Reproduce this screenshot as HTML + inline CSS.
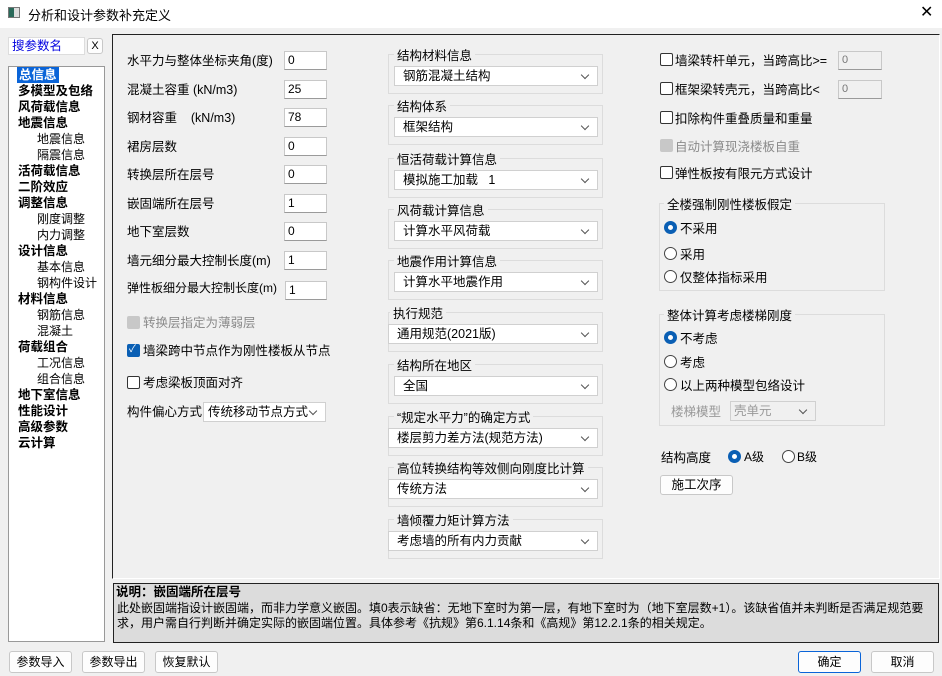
<!DOCTYPE html>
<html><head><meta charset="utf-8"><style>
*{box-sizing:border-box;margin:0;padding:0}
body{width:942px;height:676px;background:#f0f0f0;font-family:"Liberation Sans","Noto Sans CJK SC",sans-serif;font-size:12px;color:#000;position:relative;overflow:hidden}
.a{position:absolute;white-space:nowrap}
.in{position:absolute;background:#fff;border:1px solid #c8c8c8;border-bottom-color:#9a9a9a;height:19px;padding-left:3px;font-size:12px;line-height:17px}
.cb{position:absolute;width:13px;height:13px;border:1px solid #333;border-radius:2px;background:#fff}
.cbk{background:#0a5fb4;border-color:#0a5fb4}
.cbd{background:#c8c8c8;border-color:#c8c8c8}
.rd{position:absolute;width:13px;height:13px;border:1px solid #444;border-radius:50%;background:#fff}
.rdk{border:4px solid #0a5fb4;background:#fff}
.grp{position:absolute;border:1px solid #dcdcdc}
.gt{position:absolute;background:#f0f0f0;padding:0 3px;font-size:12.5px}
.combo{position:absolute;background:#fff;border:1px solid #d0d0d0;height:20px;padding-left:8px;line-height:18px;font-size:12.5px}
.combo:after{content:"";position:absolute;right:9px;top:5px;width:5px;height:5px;border-right:1px solid #555;border-bottom:1px solid #555;transform:rotate(45deg)}
.btn{position:absolute;background:#fdfdfd;border:1px solid #c8c8c8;border-radius:3px;text-align:center;font-size:12px;line-height:20px}
.tr{position:absolute;left:18px;font-size:12.5px;font-weight:bold;line-height:16px}
.ts{position:absolute;left:37px;font-size:12px;line-height:16px}
.l{position:absolute;left:127px;font-size:12.5px;white-space:nowrap}
</style></head><body>
<div class="a" style="left:0;top:0;width:942px;height:28px;background:#fff"></div>
<div class="a" style="left:8px;top:7px;width:12px;height:11px;border:1px solid #777;background:linear-gradient(90deg,#2a6a5a 50%,#ddd 50%)"></div>
<div class="a" style="left:28px;top:5px;font-size:13px">分析和设计参数补充定义</div>
<div class="a" style="left:920px;top:2px;font-size:16px">✕</div>

<div class="in" style="left:8px;top:37px;width:77px;height:18px;color:#0000e0;font-size:12.5px;border-color:#ddd">搜参数名</div>
<div class="btn" style="left:87px;top:38px;width:16px;height:16px;line-height:14px;font-size:11px">X</div>
<div class="a" style="left:8px;top:66px;width:97px;height:576px;background:#fff;border:1px solid #999"></div>
<div class="tr" style="top:67px;background:#0a64d8;color:#fff;padding:0 2px;left:17px">总信息</div>
<div class="tr" style="top:83px">多模型及包络</div>
<div class="tr" style="top:99px">风荷载信息</div>
<div class="tr" style="top:115px">地震信息</div>
<div class="ts" style="top:131px">地震信息</div>
<div class="ts" style="top:147px">隔震信息</div>
<div class="tr" style="top:163px">活荷载信息</div>
<div class="tr" style="top:179px">二阶效应</div>
<div class="tr" style="top:195px">调整信息</div>
<div class="ts" style="top:211px">刚度调整</div>
<div class="ts" style="top:227px">内力调整</div>
<div class="tr" style="top:243px">设计信息</div>
<div class="ts" style="top:259px">基本信息</div>
<div class="ts" style="top:275px">钢构件设计</div>
<div class="tr" style="top:291px">材料信息</div>
<div class="ts" style="top:307px">钢筋信息</div>
<div class="ts" style="top:323px">混凝土</div>
<div class="tr" style="top:339px">荷载组合</div>
<div class="ts" style="top:355px">工况信息</div>
<div class="ts" style="top:371px">组合信息</div>
<div class="tr" style="top:387px">地下室信息</div>
<div class="tr" style="top:403px">性能设计</div>
<div class="tr" style="top:419px">高级参数</div>
<div class="tr" style="top:435px">云计算</div>

<div class="a" style="left:112px;top:34px;width:828px;height:545px;border-top:1px solid #222;border-left:1px solid #222;border-right:1px solid #fff;border-bottom:1px solid #fff"></div>

<div class="l" style="top:50px">水平力与整体坐标夹角(度)</div><div class="in" style="left:284px;top:51px;width:43px">0</div>
<div class="l" style="top:79px">混凝土容重 (kN/m3)</div><div class="in" style="left:284px;top:80px;width:43px">25</div>
<div class="l" style="top:107px">钢材容重&nbsp;&nbsp;&nbsp; (kN/m3)</div><div class="in" style="left:284px;top:108px;width:43px">78</div>
<div class="l" style="top:136px">裙房层数</div><div class="in" style="left:284px;top:137px;width:43px">0</div>
<div class="l" style="top:164px">转换层所在层号</div><div class="in" style="left:284px;top:165px;width:43px">0</div>
<div class="l" style="top:193px">嵌固端所在层号</div><div class="in" style="left:284px;top:194px;width:43px">1</div>
<div class="l" style="top:221px">地下室层数</div><div class="in" style="left:284px;top:222px;width:43px">0</div>
<div class="l" style="top:250px">墙元细分最大控制长度(m)</div><div class="in" style="left:284px;top:251px;width:43px">1</div>
<div class="l" style="top:279px;font-size:12px">弹性板细分最大控制长度(m)</div><div class="in" style="left:285px;top:281px;width:42px">1</div>
<div class="cb cbd" style="left:127px;top:316px"></div><div class="a" style="left:143px;top:312px;font-size:12.5px;color:#8a8a8a">转换层指定为薄弱层</div>
<div class="cb cbk" style="left:127px;top:344px"></div><div class="a" style="left:129px;top:340px;color:#fff;font-size:10px">✓</div><div class="a" style="left:143px;top:340px;font-size:12.5px">墙梁跨中节点作为刚性楼板从节点</div>
<div class="cb" style="left:127px;top:376px"></div><div class="a" style="left:143px;top:372px;font-size:12.5px">考虑梁板顶面对齐</div>
<div class="l" style="top:401px">构件偏心方式</div>
<div class="combo" style="left:203px;top:402px;width:123px;padding-left:4px">传统移动节点方式</div>

<div class="grp" style="left:388px;top:54px;width:215px;height:40px"></div><div class="gt" style="left:394px;top:45px">结构材料信息</div><div class="combo" style="left:394px;top:66px;width:204px">钢筋混凝土结构</div>
<div class="grp" style="left:388px;top:105px;width:215px;height:40px"></div><div class="gt" style="left:394px;top:96px">结构体系</div><div class="combo" style="left:394px;top:117px;width:204px">框架结构</div>
<div class="grp" style="left:388px;top:158px;width:215px;height:40px"></div><div class="gt" style="left:394px;top:149px">恒活荷载计算信息</div><div class="combo" style="left:394px;top:170px;width:204px">模拟施工加载&nbsp;&nbsp; 1</div>
<div class="grp" style="left:388px;top:209px;width:215px;height:40px"></div><div class="gt" style="left:394px;top:200px">风荷载计算信息</div><div class="combo" style="left:394px;top:221px;width:204px">计算水平风荷载</div>
<div class="grp" style="left:388px;top:260px;width:215px;height:40px"></div><div class="gt" style="left:394px;top:251px">地震作用计算信息</div><div class="combo" style="left:394px;top:272px;width:204px">计算水平地震作用</div>
<div class="grp" style="left:388px;top:312px;width:215px;height:40px"></div><div class="gt" style="left:390px;top:303px">执行规范</div><div class="combo" style="left:388px;top:324px;width:210px">通用规范(2021版)</div>
<div class="grp" style="left:388px;top:364px;width:215px;height:40px"></div><div class="gt" style="left:394px;top:355px">结构所在地区</div><div class="combo" style="left:394px;top:376px;width:204px">全国</div>
<div class="grp" style="left:388px;top:416px;width:215px;height:40px"></div><div class="gt" style="left:394px;top:407px">“规定水平力”的确定方式</div><div class="combo" style="left:388px;top:428px;width:210px">楼层剪力差方法(规范方法)</div>
<div class="grp" style="left:388px;top:467px;width:215px;height:40px"></div><div class="gt" style="left:394px;top:458px">高位转换结构等效侧向刚度比计算</div><div class="combo" style="left:388px;top:479px;width:210px">传统方法</div>
<div class="grp" style="left:388px;top:519px;width:215px;height:40px"></div><div class="gt" style="left:394px;top:510px">墙倾覆力矩计算方法</div><div class="combo" style="left:388px;top:531px;width:210px">考虑墙的所有内力贡献</div>

<div class="cb" style="left:660px;top:53px"></div><div class="a" style="left:675px;top:50px;font-size:12.5px">墙梁转杆单元，当跨高比&gt;=</div><div class="in" style="left:838px;top:51px;width:44px;background:#f0f0f0;color:#777;font-size:11px">0</div>
<div class="cb" style="left:660px;top:82px"></div><div class="a" style="left:675px;top:79px;font-size:12.5px">框架梁转壳元，当跨高比&lt;</div><div class="in" style="left:838px;top:80px;width:44px;background:#f0f0f0;color:#777;font-size:11px">0</div>
<div class="cb" style="left:660px;top:111px"></div><div class="a" style="left:675px;top:108px;font-size:12.5px">扣除构件重叠质量和重量</div>
<div class="cb cbd" style="left:660px;top:139px"></div><div class="a" style="left:675px;top:136px;font-size:12.5px;color:#8a8a8a">自动计算现浇楼板自重</div>
<div class="cb" style="left:660px;top:166px"></div><div class="a" style="left:675px;top:163px;font-size:12.5px">弹性板按有限元方式设计</div>

<div class="grp" style="left:659px;top:203px;width:226px;height:88px"></div><div class="gt" style="left:664px;top:194px">全楼强制刚性楼板假定</div>
<div class="rd rdk" style="left:664px;top:221px"></div><div class="a" style="left:680px;top:218px;font-size:12.5px">不采用</div>
<div class="rd" style="left:664px;top:247px"></div><div class="a" style="left:680px;top:244px;font-size:12.5px">采用</div>
<div class="rd" style="left:664px;top:270px"></div><div class="a" style="left:680px;top:267px;font-size:12.5px">仅整体指标采用</div>

<div class="grp" style="left:659px;top:314px;width:226px;height:112px"></div><div class="gt" style="left:664px;top:305px">整体计算考虑楼梯刚度</div>
<div class="rd rdk" style="left:664px;top:331px"></div><div class="a" style="left:680px;top:328px;font-size:12.5px">不考虑</div>
<div class="rd" style="left:664px;top:355px"></div><div class="a" style="left:680px;top:352px;font-size:12.5px">考虑</div>
<div class="rd" style="left:664px;top:378px"></div><div class="a" style="left:680px;top:375px;font-size:12.5px">以上两种模型包络设计</div>
<div class="a" style="left:671px;top:401px;font-size:12.5px;color:#999">楼梯模型</div>
<div class="combo" style="left:730px;top:401px;width:86px;background:#f0f0f0;color:#999;padding-left:3px">壳单元</div>

<div class="a" style="left:661px;top:447px;font-size:12.5px">结构高度</div>
<div class="rd rdk" style="left:728px;top:450px"></div><div class="a" style="left:744px;top:448px;font-size:12px">A级</div>
<div class="rd" style="left:782px;top:450px"></div><div class="a" style="left:797px;top:448px;font-size:12px">B级</div>
<div class="btn" style="left:660px;top:475px;width:73px;height:20px;font-size:12.5px;line-height:18px">施工次序</div>

<div class="a" style="left:113px;top:583px;width:826px;height:60px;background:#dcdcdc;border:1px solid #222"></div>
<div class="a" style="left:116px;top:584px;font-weight:bold;font-size:12.5px;line-height:16px">说明：嵌固端所在层号</div>
<div class="a" style="left:117px;top:601px;font-size:12px;line-height:15px;white-space:normal;width:820px">此处嵌固端指设计嵌固端，而非力学意义嵌固。填0表示缺省：无地下室时为第一层，有地下室时为（地下室层数+1）。该缺省值并未判断是否满足规范要求，用户需自行判断并确定实际的嵌固端位置。具体参考《抗规》第6.1.14条和《高规》第12.2.1条的相关规定。</div>

<div class="btn" style="left:9px;top:651px;width:63px;height:22px">参数导入</div>
<div class="btn" style="left:82px;top:651px;width:63px;height:22px">参数导出</div>
<div class="btn" style="left:155px;top:651px;width:63px;height:22px">恢复默认</div>
<div class="btn" style="left:798px;top:651px;width:63px;height:22px;border:1px solid #0a64d8">确定</div>
<div class="btn" style="left:871px;top:651px;width:63px;height:22px">取消</div>
</body></html>
